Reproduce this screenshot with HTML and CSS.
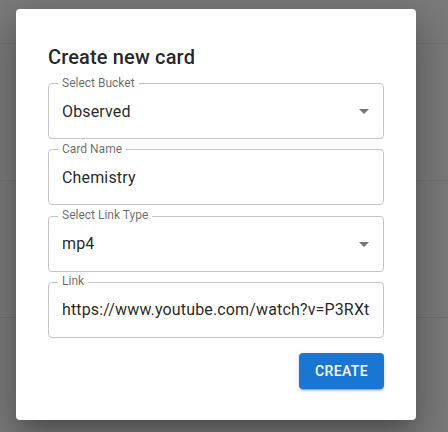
FILE: index.html
```html
<!DOCTYPE html>
<html lang="en">
<head>
<meta charset="utf-8">
<title>Create new card</title>
<link rel="stylesheet" href="styles.css">
</head>
<body>
<div class="page">
  <div class="page-header"></div>
  <div class="page-row"></div>
  <div class="page-row"></div>
  <div class="page-rest"></div>
</div>
<div class="dialog" role="dialog">
  <h2 class="dialog-title">Create new card</h2>
  <div class="fields">
    <div class="field">
      <span class="field-label">Select Bucket</span>
      <div class="field-value">Observed</div>
      <svg class="field-arrow" viewBox="0 0 24 24" width="24" height="24"><path d="M7 10l5 5 5-5z"/></svg>
    </div>
    <div class="field">
      <span class="field-label">Card Name</span>
      <div class="field-value">Chemistry</div>
    </div>
    <div class="field">
      <span class="field-label">Select Link Type</span>
      <div class="field-value">mp4</div>
      <svg class="field-arrow" viewBox="0 0 24 24" width="24" height="24"><path d="M7 10l5 5 5-5z"/></svg>
    </div>
    <div class="field field-text">
      <span class="field-label">Link</span>
      <div class="field-value">https://www.youtube.com/watch?v=P3RXt</div>
    </div>
  </div>
  <div class="dialog-actions">
    <button class="btn-primary" type="button">Create</button>
  </div>
</div>
</body>
</html>
```
FILE: styles.css
```css
html, body {
  margin: 0;
  padding: 0;
}
body {
  background: #7a7a7a;
  font-family: Roboto, "Liberation Sans", Arial, sans-serif;
  width: 448px;
  height: 432px;
  overflow: hidden;
  position: relative;
}
.page {
  height: 432px;
  display: flex;
  flex-direction: column;
}
.page-header {
  height: 43px;
  flex: none;
  border-bottom: 1px solid #6f6f6f;
}
.page-row {
  height: 136px;
  flex: none;
  border-bottom: 1px solid #6f6f6f;
}
.page-rest {
  flex: 1;
}
.dialog {
  position: absolute;
  left: 16px;
  top: 9px;
  width: 400px;
  box-sizing: border-box;
  padding: 32px 32px 31px;
  background: #fff;
  border-radius: 4px;
  box-shadow: 0px 11px 15px -7px rgba(0,0,0,0.2), 0px 24px 38px 3px rgba(0,0,0,0.14), 0px 9px 46px 8px rgba(0,0,0,0.12);
}
.dialog-title {
  margin: 0;
  font-size: 20px;
  font-weight: 500;
  line-height: 32px;
  letter-spacing: 0.15px;
  color: rgba(0,0,0,0.87);
}
.fields {
  display: flex;
  flex-direction: column;
  gap: 10.33px;
  margin-top: 10px;
}
.field {
  position: relative;
  height: 56px;
  box-sizing: border-box;
  border: 1px solid #c4c4c4;
  border-radius: 4px;
  display: flex;
  align-items: center;
  padding: 0 7px 0 13px;
}
.field-text {
  padding-right: 13px;
}
.field-label {
  position: absolute;
  top: -7.5px;
  left: 9px;
  padding: 0 4px;
  background: #fff;
  font-size: 12px;
  line-height: 12px;
  color: rgba(0,0,0,0.6);
  white-space: nowrap;
}
.field-value {
  flex: 1;
  min-width: 0;
  font-size: 16px;
  line-height: 23px;
  color: rgba(0,0,0,0.87);
  letter-spacing: 0.15px;
  white-space: nowrap;
  overflow: hidden;
}
.field-arrow {
  flex: none;
  fill: rgba(0,0,0,0.54);
}
.dialog-actions {
  display: flex;
  justify-content: flex-end;
  margin-top: 15px;
}
.btn-primary {
  border: 0;
  border-radius: 4px;
  background: #1976d2;
  color: #fff;
  font-family: Roboto, "Liberation Sans", Arial, sans-serif;
  font-size: 14px;
  font-weight: 500;
  line-height: 24.5px;
  letter-spacing: 0.4px;
  text-transform: uppercase;
  padding: 6px 16px;
  box-shadow: 0px 3px 1px -2px rgba(0,0,0,0.2), 0px 2px 2px 0px rgba(0,0,0,0.14), 0px 1px 5px 0px rgba(0,0,0,0.12);
}
```
